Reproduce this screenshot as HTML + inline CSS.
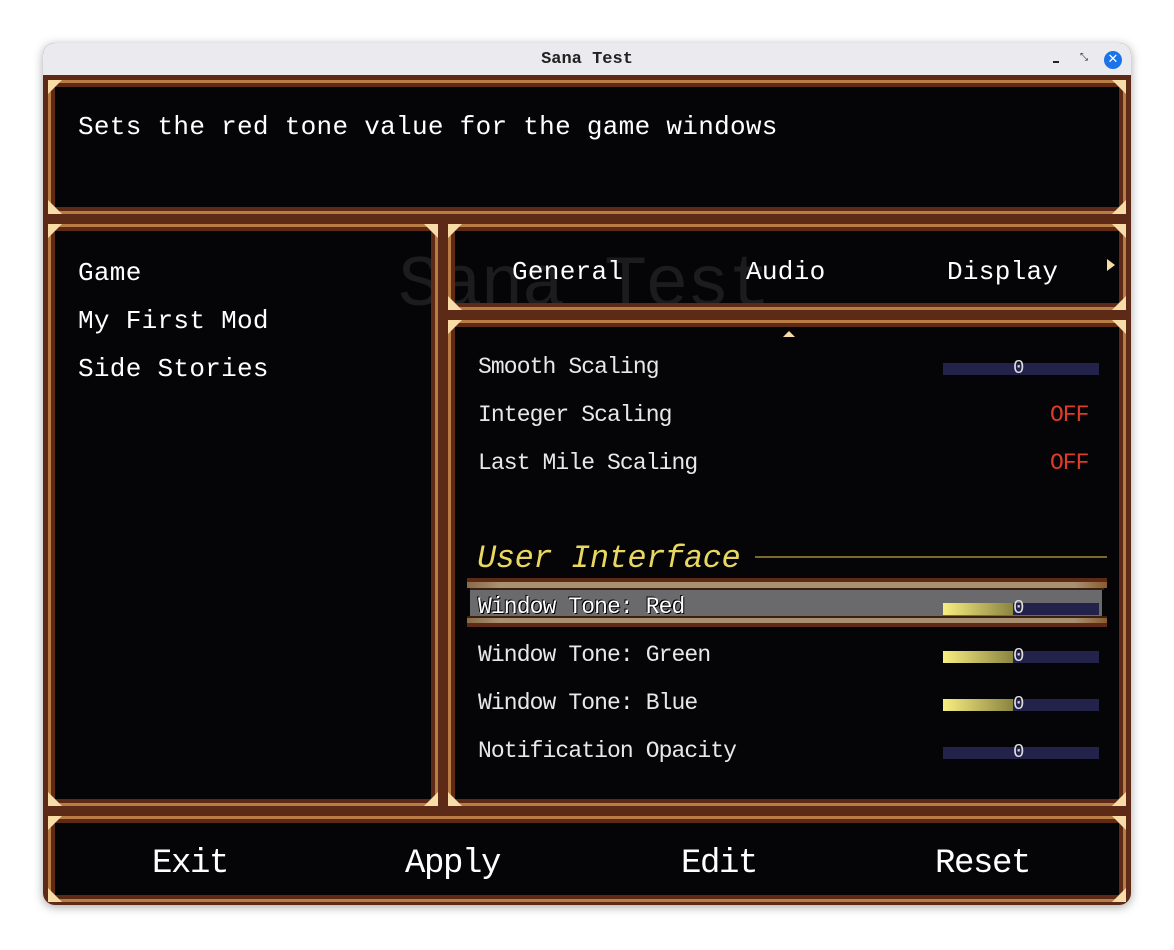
<!DOCTYPE html>
<html><head><meta charset="utf-8"><style>
*{margin:0;padding:0;box-sizing:border-box}
body{width:1174px;height:950px;background:#fff;position:relative;overflow:hidden;font-family:"Liberation Mono","DejaVu Sans Mono",monospace;color:#fff}
.win{position:absolute;left:43px;top:43px;width:1088px;height:862px;border-radius:12px;overflow:hidden;box-shadow:0 2px 10px rgba(0,0,0,.35);background:#5c2a17}
.tb{position:absolute;left:0;top:0;width:1088px;height:32px;background:#ebebef;color:#222;font:bold 17px "Liberation Mono",monospace;text-align:center;line-height:34px}
.p{position:absolute;background:#050406;box-shadow:0 0 0 4px #5c2a17,0 0 0 7px #b97c42;overflow:hidden}
.t{position:absolute;white-space:nowrap}
.c{position:absolute;width:14px;height:14px;background:#f8dca8}
.tl{clip-path:polygon(0 0,100% 0,0 100%)}
.tr{clip-path:polygon(0 0,100% 0,100% 100%)}
.bl{clip-path:polygon(0 0,100% 100%,0 100%)}
.br{clip-path:polygon(100% 0,100% 100%,0 100%)}
.row{font-size:23px;letter-spacing:-0.9px;color:#e8e8e8}
.tr2{position:absolute;height:12px;width:156px;background:#22224a;left:488px}
.fill{position:absolute;left:0;top:0;height:12px;width:70px;background:linear-gradient(90deg,#f8ee80,#8a8440)}
.k{position:absolute;left:70px;top:-8px;font-size:19px;color:#ddd;line-height:26px}
.off{position:absolute;left:595px;color:#e03a2a;font-size:23px;letter-spacing:-1px}
.wm{position:absolute;font-size:72px;color:#1c1c1e;letter-spacing:-2px;white-space:nowrap}
</style></head><body>
<div class="win">
<div class="tb">Sana Test</div>
<div style="position:absolute;right:72px;top:18px;width:6px;height:2px;background:#222"></div>
<div style="position:absolute;right:42px;top:11px;width:9px;height:9px;font-size:10px;color:#222;line-height:9px">⤡</div>
<div style="position:absolute;right:9px;top:8px;width:18px;height:18px;border-radius:50%;background:#1a73e8;color:#fff;font:bold 13px 'DejaVu Sans',sans-serif;text-align:center;line-height:18px">✕</div>

<div class="p" style="left:12px;top:44px;width:1064px;height:120px">
<div class="t" style="left:23px;top:25px;font-size:26px;letter-spacing:0.3px">Sets the red tone value for the game windows</div>
</div>
<div class="p" style="left:12px;top:188px;width:376px;height:568px">
<div class="wm" style="left:343px;top:14px">Sana Test</div>
<div class="t" style="left:23px;top:18px;font-size:26px;letter-spacing:0.3px;line-height:48px">Game<br>My First Mod<br>Side Stories</div>
</div>
<div class="p" style="left:412px;top:188px;width:664px;height:72px">
<div class="wm" style="left:-57px;top:14px">Sana Test</div>
<div class="t" style="left:57px;top:26px;font-size:26px;letter-spacing:0.3px">General</div>
<div class="t" style="left:291px;top:26px;font-size:26px;letter-spacing:0.3px">Audio</div>
<div class="t" style="left:492px;top:26px;font-size:26px;letter-spacing:0.3px">Display</div>
<div style="position:absolute;left:652px;top:28px;width:8px;height:12px;background:#f8dca8;clip-path:polygon(0 0,100% 50%,0 100%)"></div>
</div>
<div class="p" style="left:412px;top:284px;width:664px;height:472px">
<div style="position:absolute;left:328px;top:4px;width:12px;height:6px;background:#f8dca8;clip-path:polygon(50% 0,100% 100%,0 100%)"></div>
<div class="t row" style="left:23px;top:27px">Smooth Scaling</div>
<div class="tr2" style="top:36px"><div class="fill" style="width:0"></div><div class="k">0</div></div>
<div class="t row" style="left:23px;top:75px">Integer Scaling</div>
<div class="off" style="top:75px">OFF</div>
<div class="t row" style="left:23px;top:123px">Last Mile Scaling</div>
<div class="off" style="top:123px">OFF</div>
<div class="t" style="left:22px;top:213px;font-size:32px;font-style:italic;color:#e8d860;letter-spacing:-0.4px">User Interface</div>
<div style="position:absolute;left:300px;top:229px;width:352px;height:2px;background:#7a6a28"></div>
<div style="position:absolute;left:12px;top:251px;width:640px;height:4px;background:#5c2a17"></div>
<div style="position:absolute;left:12px;top:255px;width:640px;height:6px;background:linear-gradient(90deg,#8a6a48,#a89070 5%,#a89070 95%,#8a5a30)"></div>
<div style="position:absolute;left:15px;top:261px;width:634px;height:2px;background:#3a2010"></div>
<div style="position:absolute;left:15px;top:263px;width:632px;height:26px;background:#6a696b"></div>
<div style="position:absolute;left:12px;top:289px;width:640px;height:2px;background:#3a2010"></div>
<div style="position:absolute;left:12px;top:291px;width:640px;height:5px;background:linear-gradient(90deg,#8a6a48,#a89070 5%,#a89070 95%,#8a5a30)"></div>
<div style="position:absolute;left:12px;top:296px;width:640px;height:4px;background:#5c2a17"></div>
<div class="t row" style="left:23px;top:267px;color:#fff;text-shadow:1px 1px 0 #000,-1px -1px 0 #000">Window Tone: Red</div>
<div class="tr2" style="top:276px"><div class="fill"></div><div class="k">0</div></div>
<div class="t row" style="left:23px;top:315px">Window Tone: Green</div>
<div class="tr2" style="top:324px"><div class="fill"></div><div class="k">0</div></div>
<div class="t row" style="left:23px;top:363px">Window Tone: Blue</div>
<div class="tr2" style="top:372px"><div class="fill"></div><div class="k">0</div></div>
<div class="t row" style="left:23px;top:411px">Notification Opacity</div>
<div class="tr2" style="top:420px"><div class="fill" style="width:0"></div><div class="k">0</div></div>
</div>
<div class="p" style="left:12px;top:780px;width:1064px;height:72px">
<div class="t" style="left:97px;top:22px;font-size:34px;letter-spacing:-1.4px">Exit</div>
<div class="t" style="left:350px;top:22px;font-size:34px;letter-spacing:-1.4px">Apply</div>
<div class="t" style="left:626px;top:22px;font-size:34px;letter-spacing:-1.4px">Edit</div>
<div class="t" style="left:880px;top:22px;font-size:34px;letter-spacing:-1.4px">Reset</div>
</div>

<div class="c tl" style="left:5px;top:37px"></div><div class="c tr" style="left:1069px;top:37px"></div>
<div class="c bl" style="left:5px;top:157px"></div><div class="c br" style="left:1069px;top:157px"></div>
<div class="c tl" style="left:5px;top:181px"></div><div class="c tr" style="left:381px;top:181px"></div>
<div class="c tl" style="left:405px;top:181px"></div><div class="c tr" style="left:1069px;top:181px"></div>
<div class="c bl" style="left:405px;top:253px"></div><div class="c br" style="left:1069px;top:253px"></div>
<div class="c tl" style="left:405px;top:277px"></div><div class="c tr" style="left:1069px;top:277px"></div>
<div class="c bl" style="left:5px;top:749px"></div><div class="c br" style="left:381px;top:749px"></div>
<div class="c bl" style="left:405px;top:749px"></div><div class="c br" style="left:1069px;top:749px"></div>
<div class="c tl" style="left:5px;top:773px"></div><div class="c tr" style="left:1069px;top:773px"></div>
<div class="c bl" style="left:5px;top:845px"></div><div class="c br" style="left:1069px;top:845px"></div>
</div>
</body></html>
